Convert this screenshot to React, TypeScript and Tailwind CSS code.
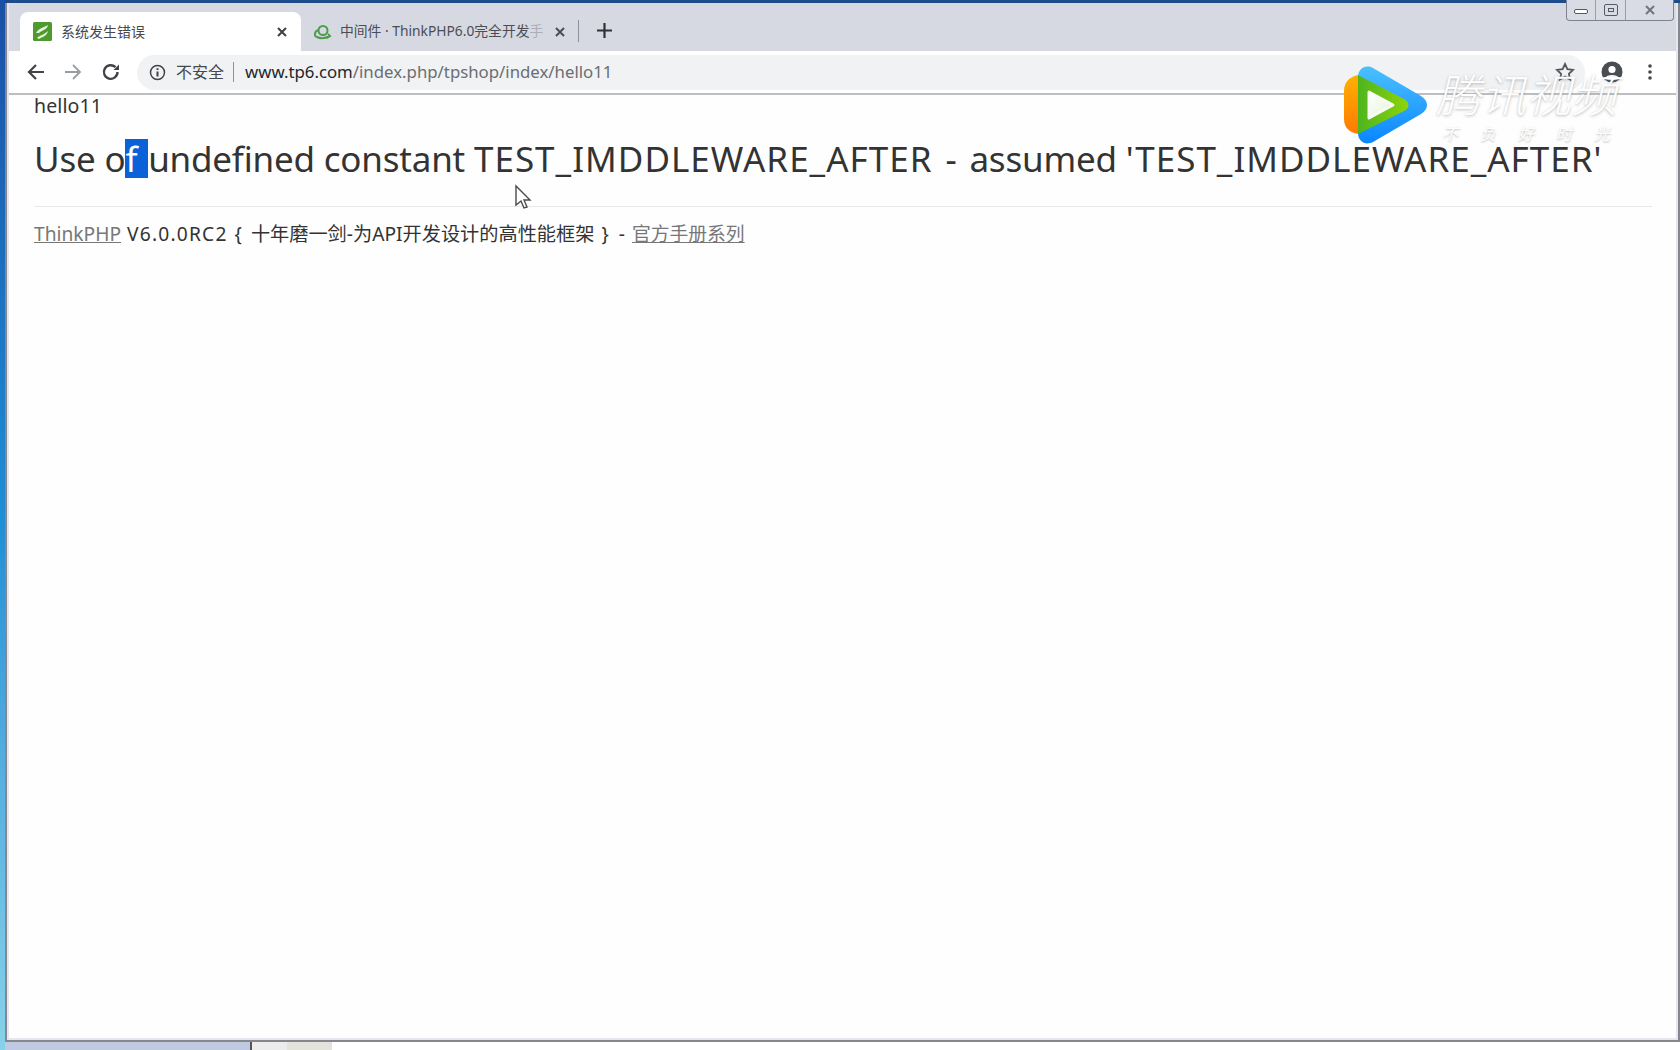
import React from "react";

const Back = () => (
  <svg width="20" height="20" viewBox="0 0 20 20" fill="none" stroke="#404347" strokeWidth="2.2"><path d="M18 10H3M10 3l-7 7 7 7" /></svg>
);
const Fwd = () => (
  <svg width="20" height="20" viewBox="0 0 20 20" fill="none" stroke="#9a9da1" strokeWidth="1.8"><path d="M2 10h15M10 3l7 7-7 7" /></svg>
);
const Reload = () => (
  <svg width="20" height="20" viewBox="0 0 20 20" fill="none" stroke="#404347" strokeWidth="2.4"><path d="M16.5 10a6.8 6.8 0 1 1-2-4.8" /><path d="M18 2.5V8h-5.5z" fill="#404347" stroke="none" /></svg>
);
const X = ({ c = "#3c3f44" }: { c?: string }) => (
  <svg width="12" height="12" viewBox="0 0 12 12" stroke={c} strokeWidth="2"><path d="M2 2l8 8M10 2l-8 8" /></svg>
);
const Logo = () => (
  <svg width="84" height="78" viewBox="0 0 84 78">
    <defs>
      <linearGradient id="o" x1="0" y1="0" x2="0" y2="1"><stop offset="0" stopColor="#ffb000" /><stop offset="1" stopColor="#ff7a00" /></linearGradient>
      <linearGradient id="b" x1="0" y1="0" x2="0" y2="1"><stop offset="0" stopColor="#4cc0ff" /><stop offset="1" stopColor="#0a86ff" /></linearGradient>
      <linearGradient id="g" x1="0" y1="0" x2="1" y2="0"><stop offset="0" stopColor="#4db51e" /><stop offset="1" stopColor="#8fd40a" /></linearGradient>
      <linearGradient id="w" x1="0" y1="0" x2="1" y2="1"><stop offset="0" stopColor="#ffffff" /><stop offset="1" stopColor="#e4f2d4" /></linearGradient>
    </defs>
    <path d="M15 9C6 10 0 16 0 25v28c0 9 6 14 15 15z" fill="url(#o)" />
    <path d="M14 11C14 3 21-2 29 2l48 28c8 5 8 13 0 18L29 76c-8 4-15-1-15-9z" fill="url(#b)" />
    <path d="M14 9l46 24c6 3 6 9 0 12L14 68z" fill="url(#g)" />
    <path d="M25 26l24 13-24 13z" fill="url(#w)" stroke="#f6faf2" strokeWidth="3" strokeLinejoin="round" />
  </svg>
);

export default function App() {
  const cjk = { fontFamily: '"Noto Sans", "Noto Sans CJK SC", sans-serif' };
  return (
    <div className="relative flex h-[1050px] w-[1680px] overflow-hidden bg-white" style={cjk}>
      <div className="w-[5px] shrink-0 bg-gradient-to-b from-[#1a4fa6] via-[#1f8fd6] to-[#86d2ea]" />
      <div className="flex min-w-0 flex-1 flex-col">
        <div className="h-[3px] shrink-0 bg-[#1d4c8c]" />
        <div className="flex min-h-0 flex-1 flex-col border-r-2 border-b-2 border-l-2 border-[#85878d]">
          <div className="flex min-h-0 flex-1 flex-col border-r-2 border-b-2 border-l-2 border-[#e6e6f0] bg-[#fefefe]">
            <div className="flex h-[48px] shrink-0 items-end bg-[#d6d9e2] pl-[11px]">
              <div className="flex h-[39px] w-[281px] items-center rounded-t-[8px] bg-white pr-[13px] pl-[13px]">
                <svg width="19" height="19" viewBox="0 0 19 19"><rect width="19" height="19" rx="1.5" fill="#4f9a2c" /><path d="M3 11c3-5 7-5 12-8-1 5-6 5-9 8zM4 16c3-3 7-3 11-7-1 5-6 6-9 8z" fill="#e8f3df" /></svg>
                <span className="ml-[9px] flex-1 text-[14px] text-[#45484d]">系统发生错误</span>
                <X />
              </div>
              <div className="flex h-[39px] w-[277px] items-center pr-[12px] pl-[13px]">
                <svg width="18" height="16" viewBox="0 0 18 16" fill="none" stroke="#4d9c4c" strokeWidth="2"><circle cx="9" cy="6.5" r="4.5" /><path d="M4 6C0 8 0 12 3 13c4 2 9 1 13-1M13 14l3-2-2-2" /></svg>
                <span className="ml-[8px] flex-1 text-[13.8px] whitespace-nowrap text-[#4a4d52]">中间件 · ThinkPHP6.0完全开发<span className="opacity-30">手</span></span>
                <X c="#4a4d52" />
              </div>
              <div className="mb-[9px] h-[22px] w-px bg-[#8e9197]" />
              <svg className="mb-[13px] ml-[18px]" width="15" height="15" viewBox="0 0 15 15" stroke="#2f3236" strokeWidth="2.2"><path d="M7.5 0v15M0 7.5h15" /></svg>
            </div>
            <div className="flex h-[42px] shrink-0 items-center bg-white pr-[24px] pl-[17px]">
              <Back />
              <span className="ml-[17px]"><Fwd /></span>
              <span className="ml-[18px]"><Reload /></span>
              <div className="ml-[16px] flex h-[35px] flex-1 items-center rounded-full bg-[#f0f2f4] pl-[12px]">
                <svg width="17" height="17" viewBox="0 0 17 17" fill="none" stroke="#3f4246" strokeWidth="1.5"><circle cx="8.5" cy="8.5" r="7" /><path d="M8.5 7.5v5M8.5 4.2v1.8" strokeWidth="2" /></svg>
                <span className="ml-[10px] text-[16px] text-[#45484c]">不安全</span>
                <span className="mx-[9px] h-[20px] w-px bg-[#8f9296]" />
                <span className="ml-[2px] text-[16.8px] whitespace-nowrap text-[#6b6e72]"><span className="text-[#24272b]">www.tp6.com</span>/index.php/tpshop/index/hello11</span>
              </div>
              <div className="-ml-[30px] flex items-center">
                <svg width="20" height="20" viewBox="0 0 20 20" fill="none" stroke="#54575c" strokeWidth="1.8"><path d="M10 2l2.4 5.2 5.6.7-4.1 3.9 1.1 5.6-5-2.8-5 2.8 1.1-5.6L2 7.9l5.6-.7z" /></svg>
                <svg className="ml-[26px]" width="22" height="22" viewBox="0 0 22 22"><circle cx="11" cy="11" r="10.5" fill="#494c50" /><circle cx="11" cy="8.5" r="3.6" fill="#fff" /><path d="M4 17c2-4 12-4 14 0-3 3-11 3-14 0z" fill="#fff" /></svg>
                <svg className="ml-[25px]" width="4" height="16" viewBox="0 0 4 16" fill="#45484c"><circle cx="2" cy="2" r="1.8" /><circle cx="2" cy="8" r="1.8" /><circle cx="2" cy="14" r="1.8" /></svg>
              </div>
            </div>
            <div className="h-[2px] shrink-0 bg-[#bdbec1]" />
            <div className="relative flex-1 pr-[24px] pl-[25px] text-[#333]">
              <div className="-mt-[1px] text-[19.5px] leading-[24px] tracking-[0.1px]">hello11</div>
              <h1 className="mt-[18px] text-[35px] leading-[46px] tracking-[-0.2px] whitespace-pre">
                Use o<span className="inline-block bg-[#0a62d8] pr-[2px] leading-[39px] text-white">f </span>undefined constant <span className="tracking-[1.02px]">TEST_IMDDLEWARE_AFTER</span> <span className="mx-[4px]">-</span> assumed <span className="tracking-[1px]">'TEST_IMDDLEWARE_AFTER'</span>
              </h1>
              <div className="mt-[24px] border-t border-[#e8e8e8] pt-[14px] text-[19.2px] leading-[26px] whitespace-nowrap">
                <span className="text-[#777] underline">ThinkPHP</span>
                <span className="ml-[6px] tracking-[1.2px]">V6.0.0RC2</span>
                <span className="ml-[7px]">{"{"}</span>
                <span className="ml-[9px]">十年磨一剑-为API开发设计的高性能框架</span>
                <span className="ml-[7px]">{"}"}</span>
                <span className="ml-[10px]">-</span>
                <span className="ml-[7px] text-[18.8px] text-[#777] underline">官方手册系列</span>
              </div>
              <svg className="absolute top-[89px] left-[505px]" width="18" height="26" viewBox="0 0 18 26"><path d="M2 2v19l5-4 3 7 3-1-3-7h6z" fill="#fff" stroke="#4a4a4a" strokeWidth="1.4" /></svg>
            </div>
          </div>
        </div>
        <div className="flex h-[8px] shrink-0">
          <div className="w-[245px] bg-[#c0c9e2]" />
          <div className="w-[2px] bg-[#555]" />
          <div className="w-[35px] bg-[#ececec]" />
          <div className="w-[45px] bg-[#e4e2dc]" />
          <div className="flex-1 bg-white" />
        </div>
      </div>
      <div className="absolute top-0 right-[6px] flex h-[21px] w-[108px] rounded-b-[4px] border-x border-b border-[#7f8590] bg-[#d9dce4]">
        <div className="flex w-[29px] items-center justify-center border-r border-[#9a9ea8]"><span className="mt-[3px] h-[5px] w-[14px] rounded-[2px] border border-[#555a63] bg-white" /></div>
        <div className="flex w-[30px] items-center justify-center border-r border-[#9a9ea8]"><span className="flex h-[12px] w-[14px] items-center justify-center rounded-[2px] border border-[#555a63]"><span className="h-[4px] w-[6px] border border-[#555a63]" /></span></div>
        <div className="flex flex-1 items-center justify-center"><X c="#70757e" /></div>
      </div>
      <div className="absolute top-[66px] left-[1344px]"><Logo /></div>
      <div className="absolute top-[68px] left-[1436px] text-[45px] leading-[50px] font-light whitespace-nowrap text-white italic [text-shadow:0_1px_3px_rgba(120,120,120,0.55)]" style={{ fontFamily: '"Noto Sans CJK SC", sans-serif' }}>腾讯视频</div>
      <div className="absolute top-[122px] left-[1442px] flex w-[168px] justify-between text-[16px] leading-[22px] text-white italic [text-shadow:0_1px_2px_rgba(120,120,120,0.5)]" style={{ fontFamily: '"Noto Sans CJK SC", sans-serif' }}>
        <span>不</span><span>负</span><span>好</span><span>时</span><span>光</span>
      </div>
    </div>
  );
}
